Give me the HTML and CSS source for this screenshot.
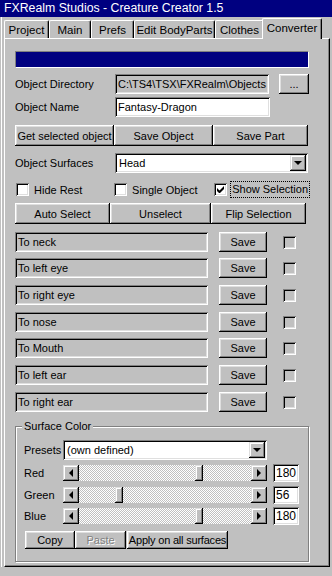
FILE: index.html
```html
<!DOCTYPE html>
<html>
	<head>
		<meta charset='utf-8' />
		<title>Creature Creator</title>
		<link rel="stylesheet" href="styles.css">
	</head>
	<body>
		<div class="titlebar">FXRealm Studios - Creature Creator 1.5</div>

		<div class="main">
			<div class="tabs">
				<div class="tab tab-project">Project</div>
				<div class="tab tab-main">Main</div>
				<div class="tab tab-prefs">Prefs</div>
				<div class="tab tab-body">Edit BodyParts</div>
				<div class="tab tab-clothes">Clothes</div>
				<div class="tab tab-conv active">Converter</div>
			</div>

			<div class="panel">
				<div class="progress"></div>

				<div class="row row-dir">
					<label class="lbl">Object Directory</label>
					<div class="field field-dir sunken disabled">C:\TS4\TSX\FXRealm\Objects</div>
					<button class="btn btn-dots">...</button>
				</div>

				<div class="row row-name">
					<label class="lbl">Object Name</label>
					<div class="field field-name sunken">Fantasy-Dragon</div>
				</div>

				<div class="row row-btns">
					<button class="btn w99">Get selected object</button>
					<button class="btn w99">Save Object</button>
					<button class="btn w95">Save Part</button>
				</div>

				<div class="row row-surf">
					<label class="lbl">Object Surfaces</label>
					<div class="combo combo-surf sunken">
						<span class="combo-text">Head</span>
						<span class="combo-btn"><i class="arr-down"></i></span>
					</div>
				</div>

				<div class="row row-checks">
					<div class="check check-1"><span class="box"></span>Hide Rest</div>
					<div class="check check-2"><span class="box"></span>Single Object</div>
					<div class="check check-3">
						<span class="box"><svg width="7" height="7" viewBox="0 0 7 7"><path d="M0 2v3l2 2h1l4-4V0L2.5 4.5z" fill="#000"/></svg></span>
						<span class="focus">Show Selection</span>
					</div>
				</div>

				<div class="row row-btns2">
					<button class="btn w95">Auto Select</button>
					<button class="btn w101">Unselect</button>
					<button class="btn w95">Flip Selection</button>
				</div>

				<div class="parts">
					<div class="part"><div class="field part-name sunken disabled">To neck</div><button class="btn btn-save">Save</button><span class="box box-off"></span></div>
					<div class="part gap6"><div class="field part-name sunken disabled">To left eye</div><button class="btn btn-save">Save</button><span class="box box-off"></span></div>
					<div class="part"><div class="field part-name sunken disabled">To right eye</div><button class="btn btn-save">Save</button><span class="box box-off"></span></div>
					<div class="part"><div class="field part-name sunken disabled">To nose</div><button class="btn btn-save">Save</button><span class="box box-off"></span></div>
					<div class="part gap6"><div class="field part-name sunken disabled">To Mouth</div><button class="btn btn-save">Save</button><span class="box box-off"></span></div>
					<div class="part"><div class="field part-name sunken disabled">To left ear</div><button class="btn btn-save">Save</button><span class="box box-off"></span></div>
					<div class="part"><div class="field part-name sunken disabled">To right ear</div><button class="btn btn-save">Save</button><span class="box box-off"></span></div>
				</div>

				<div class="group">
					<span class="group-title">Surface Color</span>

					<div class="grow grow-presets">
						<span class="glbl">Presets</span>
						<div class="combo combo-presets sunken">
							<span class="combo-text">(own defined)</span>
							<span class="combo-btn"><i class="arr-down"></i></span>
						</div>
					</div>

					<div class="grow grow-red">
						<span class="glbl">Red</span>
						<div class="scroll">
							<span class="sbtn"><i class="arr-left"></i></span>
							<div class="track"><span class="thumb" style="left:116px"></span></div>
							<span class="sbtn"><i class="arr-right"></i></span>
						</div>
						<div class="val sunken">180</div>
					</div>

					<div class="grow grow-green">
						<span class="glbl">Green</span>
						<div class="scroll">
							<span class="sbtn"><i class="arr-left"></i></span>
							<div class="track"><span class="thumb" style="left:36px"></span></div>
							<span class="sbtn"><i class="arr-right"></i></span>
						</div>
						<div class="val sunken">56</div>
					</div>

					<div class="grow grow-blue">
						<span class="glbl">Blue</span>
						<div class="scroll">
							<span class="sbtn"><i class="arr-left"></i></span>
							<div class="track"><span class="thumb" style="left:116px"></span></div>
							<span class="sbtn"><i class="arr-right"></i></span>
						</div>
						<div class="val sunken">180</div>
					</div>

					<div class="grow grow-btns">
						<button class="btn btn-copy">Copy</button>
						<button class="btn btn-paste" disabled>Paste</button>
						<button class="btn btn-apply">Apply on all surfaces</button>
					</div>
				</div>
			</div>
		</div>
	</body>
</html>
```

FILE: styles.css
```css
body{
	margin:0;
	width:332px;
	height:576px;
	overflow:hidden;
	background-color:#c0c0c0;
	font: normal 11px "Liberation Sans", Arial, sans-serif;
	color:#000;
	white-space:nowrap;
}
.titlebar{
	height:17px;
	line-height:17px;
	padding-left:4px;
	background-color:#000080;
	color:#fff;
	font-size:12.3px;
}
.main{
	padding-left:4px;
	background: linear-gradient(to right, #c0c0c0 1px, #fff 1px, #fff 2px, #c0c0c0 2px);
}

/* tabs */
.tabs{
	display:flex;
	align-items:flex-end;
	height:21px;
	position:relative;
	z-index:1;
}
.tab{
	height:18px;
	line-height:18px;
	text-align:center;
	box-sizing:border-box;
	border-top:1px solid #fff;
	border-left:1px solid #fff;
	border-right:1px solid #000;
	box-shadow: inset -1px 0 #808080;
	border-radius:2px 2px 0 0;
	background-color:#c0c0c0;
	font-size:11.5px;
}
.tab-project{ width:45px; }
.tab-main{ width:42px; }
.tab-prefs{ width:43px; }
.tab-body{ width:81px; }
.tab-clothes{ width:49px; }
.tab-conv{ width:60px; }
.tab.active{
	height:21px;
	margin-left:-2px;
	margin-bottom:-1px;
	line-height:18px;
}

/* main panel */
.panel{
	width:326px;
	height:529px;
	box-sizing:border-box;
	border-top:1px solid #fff;
	border-left:1px solid #fff;
	border-right:1px solid #000;
	border-bottom:1px solid #000;
	box-shadow: inset -1px -1px #808080;
	padding:12px 0 0 10px;
}

.sunken{
	box-shadow: inset 1px 1px #808080, inset -1px -1px #fff, inset 2px 2px #000, inset -2px -2px #dfdfdf;
	background-color:#fff;
}
.sunken.disabled{ background-color:#c0c0c0; }

.btn{
	box-sizing:border-box;
	border:none;
	padding:0;
	margin:0;
	background-color:#c0c0c0;
	box-shadow: inset -1px -1px #000, inset 1px 1px #fff, inset -2px -2px #808080, inset 2px 2px #dfdfdf;
	font: inherit;
	color:#000;
	text-align:center;
	white-space:nowrap;
	height:100%;
}
.w95{ width:95px; }
.w99{ width:99px; }
.w101{ width:101px; }

.progress{
	width:294px;
	height:17px;
	box-sizing:border-box;
	background-color:#000080;
	border:1px solid;
	border-color:#808080 #fff #fff #808080;
}

.row{
	display:flex;
	align-items:center;
	width:294px;
}
.lbl{ width:100px; flex:none; }
.field{
	box-sizing:border-box;
	height:20px;
	line-height:20px;
	padding-left:3px;
	overflow:hidden;
}
.row-dir{ margin-top:5px; height:21px; }
.field-dir{ width:154px; }
.btn-dots{ width:30px; height:20px; margin-left:10px; align-self:flex-end; }
.row-name{ margin-top:3px; height:20px; }
.field-name{ width:155px; }
.row-btns{ margin-top:8px; height:21px; }
.row-surf{ margin-top:7px; height:20px; }

.combo{
	box-sizing:border-box;
	display:flex;
	align-items:center;
	height:100%;
	padding:2px;
}
.combo-text{ flex:1; padding-left:2px; }
.combo-btn{
	width:16px;
	height:100%;
	display:flex;
	align-items:center;
	justify-content:center;
	background-color:#c0c0c0;
	box-shadow: inset -1px -1px #000, inset 1px 1px #dfdfdf, inset -2px -2px #808080, inset 2px 2px #fff;
}
.combo-surf{ width:193px; }

.arr-down{
	width:0; height:0;
	border-left:4px solid transparent;
	border-right:4px solid transparent;
	border-top:4px solid #000;
}
.arr-left{
	width:0; height:0;
	border-top:4px solid transparent;
	border-bottom:4px solid transparent;
	border-right:4px solid #000;
}
.arr-right{
	width:0; height:0;
	border-top:4px solid transparent;
	border-bottom:4px solid transparent;
	border-left:4px solid #000;
}

/* checkboxes */
.row-checks{ margin-top:8px; height:17px; }
.check{ display:flex; align-items:center; }
.check-1{ width:99px; margin-left:1px; }
.check-2{ width:101px; }
.box{
	width:13px;
	height:13px;
	box-sizing:border-box;
	flex:none;
	display:flex;
	align-items:center;
	justify-content:center;
	background-color:#fff;
	box-shadow: inset 1px 1px #808080, inset -1px -1px #fff, inset 2px 2px #000, inset -2px -2px #dfdfdf;
	margin-right:5px;
}
.box-off{ background-color:#c0c0c0; margin:0 0 0 16px; }
.focus{
	outline:1px dotted #000;
	padding:0 1px;
	margin-left:-1px;
	line-height:15px;
}
.row-btns2{ margin-top:5px; height:21px; }

/* part list */
.parts{ margin-top:8px; }
.part{
	display:flex;
	align-items:center;
	height:20px;
	margin-top:7px;
}
.part:first-child{ margin-top:0; }
.part.gap6{ margin-top:6px; }
.part-name{ width:193px; }
.btn-save{ width:48px; margin-left:11px; }

/* surface color group */
.group{
	position:relative;
	margin-top:14px;
	padding:13px 0 11px 8px;
	width:294px;
	height:136px;
	box-sizing:border-box;
	border:1px solid #808080;
	box-shadow: 1px 1px #fff, inset 1px 1px #fff;
}
.group-title{
	position:absolute;
	top:-7px;
	left:6px;
	padding:0 2px;
	line-height:13px;
	background-color:#c0c0c0;
}
.grow{
	display:flex;
	align-items:center;
}
.glbl{ width:39px; flex:none; }
.grow-presets{ height:20px; }
.combo-presets{ width:204px; }
.grow-red{ margin-top:4px; height:18px; }
.grow-green{ margin-top:4px; height:18px; }
.grow-blue{ margin-top:3px; height:18px; }

.scroll{
	display:flex;
	width:204px;
	height:16px;
}
.sbtn{
	width:16px;
	height:16px;
	flex:none;
	display:flex;
	align-items:center;
	justify-content:center;
	background-color:#c0c0c0;
	box-shadow: inset -1px -1px #000, inset 1px 1px #dfdfdf, inset -2px -2px #808080, inset 2px 2px #fff;
}
.track{
	flex:1;
	position:relative;
	background: repeating-conic-gradient(#fff 0 25%, #c0c0c0 0 50%) 0 0/2px 2px;
}
.thumb{
	position:absolute;
	top:0;
	width:8px;
	height:16px;
	background-color:#c0c0c0;
	box-shadow: inset -1px -1px #000, inset 1px 1px #dfdfdf, inset -2px -2px #808080, inset 2px 2px #fff;
}
.val{
	width:26px;
	height:18px;
	line-height:18px;
	box-sizing:border-box;
	margin-left:6px;
	padding-left:3px;
	font-size:12px;
}

.grow-btns{ margin-top:6px; height:18px; }
.btn-copy{ width:50px; margin-left:1px; }
.btn-paste{ width:51px; color:#808080; text-shadow:1px 1px #fff; }
.btn-apply{ width:101px; margin-left:1px; letter-spacing:-0.2px; }
```
